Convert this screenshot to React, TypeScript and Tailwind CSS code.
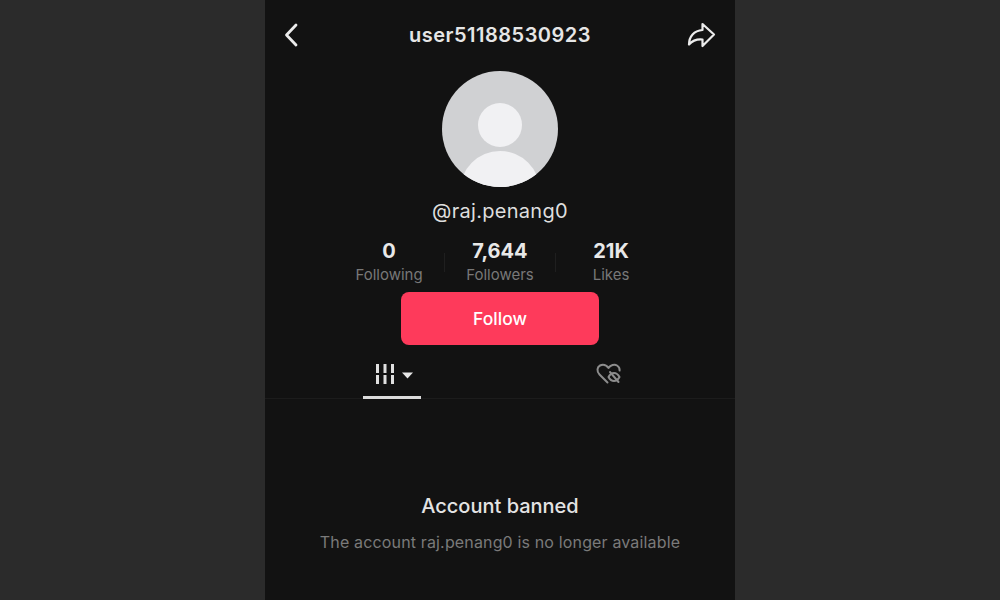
export default function App() {
  const stats = [
    ["0", "Following"],
    ["7,644", "Followers"],
    ["21K", "Likes"],
  ];
  return (
    <div className="flex justify-center w-[1000px] h-[600px] overflow-hidden bg-[#2b2b2b] font-['Inter',sans-serif]">
      <div className="w-[470px] h-[600px] bg-[#121212] flex flex-col items-center">
        <div className="w-full h-[71px] shrink-0 flex items-center justify-between px-[19px] pb-[1px]">
          <div className="w-[31px] flex justify-start">
            <svg width="14" height="24" viewBox="0 0 14 24" fill="none" stroke="#ececec" strokeWidth="2.8" strokeLinecap="round" strokeLinejoin="round">
              <path d="M12 2 L2.5 12 L12 22" />
            </svg>
          </div>
          <div className="text-[20px] leading-[24px] font-semibold text-[#e6e6e6] tracking-[0.5px]">user51188530923</div>
          <div className="w-[31px] flex justify-end">
            <svg width="29" height="26" viewBox="0 0 29 26" fill="none" stroke="#ececec" strokeWidth="2.2" strokeLinejoin="round" strokeLinecap="round">
              <path d="M15.5 2 L27 12.5 L15.5 24 L15.5 17.5 C10 17 6 18 2 22.5 C2 14.5 7 8.5 15.5 8 Z" />
            </svg>
          </div>
        </div>
        <div className="relative w-[116px] h-[116px] rounded-full bg-[#d0d1d3] overflow-hidden shrink-0">
          <div className="absolute left-[36px] top-[32px] w-[44px] h-[44px] rounded-full bg-[#f1f1f3]" />
          <div className="absolute left-[18px] top-[80px] w-[80px] h-[80px] rounded-full bg-[#f1f1f3]" />
        </div>
        <div className="mt-[11px] text-[20px] leading-[26px] text-[#dedede] tracking-[0.3px]">@raj.penang0</div>
        <div className="mt-[15px] flex items-center">
          {stats.map(([n, l], i) => (
            <div key={l} className="flex items-center">
              {i > 0 && <div className="w-px h-[19px] bg-[#1f1f1f] mt-[1px]" />}
              <div className="w-[110px] flex flex-col items-center">
                <div className="text-[20px] leading-[24px] font-bold text-[#e8e8e8]">{n}</div>
                <div className="text-[15px] leading-[20px] text-[#787878] mt-[2px]">{l}</div>
              </div>
            </div>
          ))}
        </div>
        <button className="mt-[7px] w-[198px] h-[53px] pt-[1px] rounded-[8px] bg-[#fe3a5b] text-white text-[17.5px] font-medium shrink-0">Follow</button>
        <div className="w-full h-[54px] border-b border-[#1c1c1c] flex shrink-0">
          <div className="w-[58px] ml-[98px] flex items-start justify-start gap-[8px] pl-[13px] pt-[19px] relative">
            <svg width="18" height="20" viewBox="0 0 18 20" fill="#e0e0e0" className="shrink-0">
              <rect x="0" y="0" width="3" height="9" />
              <rect x="7.5" y="0" width="3" height="9" />
              <rect x="15" y="0" width="3" height="9" />
              <rect x="0" y="11" width="3" height="9" />
              <rect x="7.5" y="11" width="3" height="9" />
              <rect x="15" y="11" width="3" height="9" />
            </svg>
            <svg width="11" height="7" viewBox="0 0 11 7" fill="#e6e6e6" className="mt-[8px] shrink-0">
              <path d="M0 0.5 H11 L5.5 6.5 Z" />
            </svg>
            <div className="absolute left-0 w-[58px] bottom-[-1px] h-[3px] bg-[#dcdcdc]" />
          </div>
          <div className="ml-[175px] pt-[18px]">
            <svg width="26" height="23" viewBox="0 0 26 23" fill="none" stroke="#8c8c8c" strokeWidth="2" strokeLinecap="round" strokeLinejoin="round">
              <path d="M11.5 19.5 L3.5 11.5 C0.5 8.5 1 4 4 2.5 C7 1 10.5 2 12.5 5 C14.5 2 18.5 1 21 2.5 C22.8 3.6 23.8 5.6 23.6 7.6" />
              <path d="M12.5 14 C14 11.3 16 10 18 10 C20 10 22 11.3 23.5 14 C22 16.7 20 18 18 18 C16 18 14 16.7 12.5 14 Z" />
              <path d="M14 9 L22.5 19" />
            </svg>
          </div>
        </div>
        <div className="mt-[94px] text-[20px] leading-[26px] font-medium text-[#e4e4e4]">Account banned</div>
        <div className="mt-[12px] text-[16px] leading-[22px] text-[#7a7a7a] tracking-[0.15px]">The account raj.penang0 is no longer available</div>
      </div>
    </div>
  );
}
